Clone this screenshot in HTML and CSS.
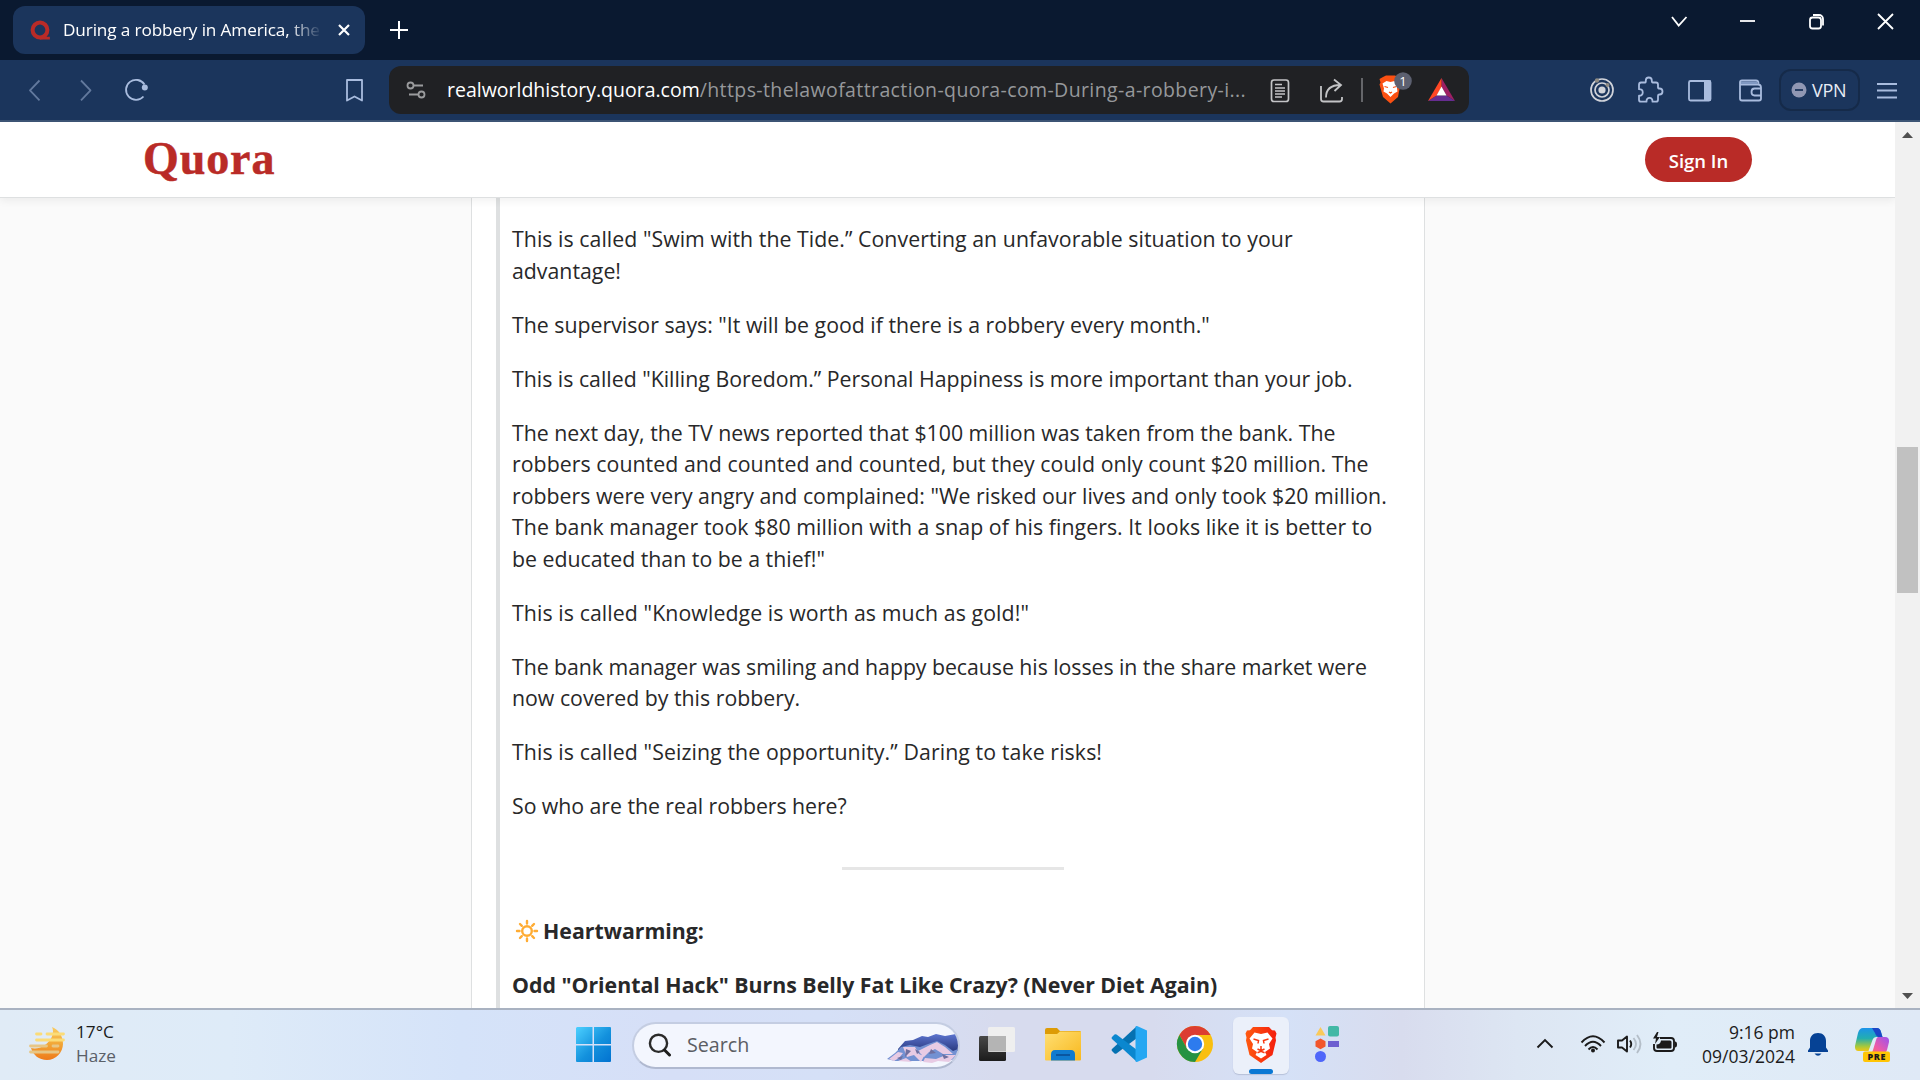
FILE: index.html
```html
<!DOCTYPE html>
<html lang="en">
<head>
<meta charset="utf-8">
<title>During a robbery in America, the</title>
<link rel="stylesheet" href="styles.css">
</head>
<body>
<div class="tabstrip">
  <div class="tab">
    <svg class="tab-icon" width="20" height="20" viewBox="30 20 20 20"><circle cx="40" cy="30" r="7.4" fill="none" stroke="#b92b27" stroke-width="4"/><path d="M40 36h5l1.500 .8h3.400v2.700H40z" fill="#b92b27"/></svg>
    <span class="tab-title">During a robbery in America, the</span>
    <svg class="tab-close" width="16" height="16" viewBox="336 22 16 16"><path d="M339 25l10 10M349 25l-10 10" stroke="#fff" stroke-width="2.200"/></svg>
  </div>
  <svg class="new-tab" width="24" height="24" viewBox="387 18 24 24"><path d="M390 30h18M399 21v18" stroke="#fff" stroke-width="2"/></svg>
  <div class="window-controls">
    <svg width="24" height="24" viewBox="1666 10 24 24"><path d="M1672 17l6.700 8.500 7.800-8.500" class="w-line"/></svg>
    <svg width="24" height="24" viewBox="1735 10 24 24"><path d="M1740 21h15" class="w-line"/></svg>
    <svg width="24" height="24" viewBox="1804 10 24 24"><rect x="1810" y="17.500" width="11" height="11" rx="2.500" class="w-line"/><path d="M1813 15h6a4 4 0 0 1 4 4v6.500" class="w-line"/></svg>
    <svg width="24" height="24" viewBox="1873 10 24 24"><path d="M1878 14l15 15M1893 14l-15 15" class="w-line"/></svg>
  </div>
</div>

<div class="toolbar">
  <svg class="ic back" viewBox="18 74 32 32"><path d="M39.500 80.500L30 90.300l9.500 10" class="t-line"/></svg>
  <svg class="ic forward" viewBox="69 74 32 32"><path d="M81 80.500l9.500 9.800-9.500 10" class="t-line"/></svg>
  <svg class="ic reload" viewBox="120 74 32 32"><path d="M144.500 84.500a10 10 0 1 0-1 12" class="t-line"/><circle cx="144.800" cy="87.500" r="3" fill="#a9bcde"/></svg>
  <svg class="ic bookmark" viewBox="338 74 32 32"><path d="M347 80h15v20.500l-7.500-4-7.500 4z" class="t-line"/></svg>
  <div class="omnibox">
    <svg class="ic tune" viewBox="400 74 32 32"><g fill="none" stroke="#9a9b9d" stroke-width="1.800"><circle cx="410.500" cy="85.500" r="3"/><path d="M413.500 85.500h9.500M409 94.500h9.500"/><circle cx="421.500" cy="94.500" r="3"/></g></svg>
    <div class="url"><span class="host">realworldhistory.quora.com</span><span class="path">/https-thelawofattraction-quora-com-During-a-robbery-i...</span></div>
    <svg class="ic reader" viewBox="1264 74 32 32"><g fill="none" stroke="#c3c4c6" stroke-width="1.700"><rect x="1271.500" y="80" width="17" height="21.500" rx="2.500"/><path d="M1275 84.500h7M1275 88h10M1275 91h10M1275 94h10M1275 97h7"/></g></svg>
    <svg class="ic share" viewBox="1315 74 32 32"><g fill="none" stroke="#c3c4c6" stroke-width="1.800"><path d="M1321 86v13q0 2.500 2.500 2.500h16q2.500 0 2.500-2.500v-2"/><path d="M1326 97.500c0-8 5-12.500 14.500-12.500M1334 79.500l7 5.500-6.500 6"/></g></svg>
    <span class="divider"></span>
    <svg class="shield" width="40" height="36" viewBox="1374 72 40 36"><path d="M1383 77l3-1.500h9l3 1.500 2 2.500-.5 3.500.8 2-2.300 12-7.500 6.500-7.500-6.500-3.500-12.500 1-2-1-3.500z" fill="#fb5012"/><path d="M1382.500 83.500l4-2.500 4 1 4-1 4 2.500-1.500 5 .5 3-3.500 2-3.500 3.500-3.500-3.500-3.500-2 .5-3z" fill="#fff"/><path d="M1384.500 86.500l3.500 1M1396.500 86.500l-3.500 1M1389 92l1.500 1 1.500-1" stroke="#fb5012" stroke-width="1.300" fill="none"/><circle cx="1403" cy="81" r="8.800" fill="#5c6070"/><text x="1403" y="86" text-anchor="middle" class="badge">1</text></svg>
    <svg class="ic bat" viewBox="1425 74 32 32"><path d="M1441.500 78v9l5 8.500 8.500 5.500z" fill="#9e1f63"/><path d="M1428 101l8.500-5.500h10l8.500 5.500z" fill="#662d91"/><path d="M1441.500 78L1428 101l8.500-5.500 5-8z" fill="#ff4724"/><path d="M1441.500 86.500l-5 9h10z" fill="#fff"/></svg>
  </div>
  <svg class="ic rewards" viewBox="1586 74 32 32"><g fill="none" stroke="#d0d3da" stroke-width="1.700"><circle cx="1602" cy="90" r="11"/><circle cx="1602" cy="90" r="7"/></g><circle cx="1602" cy="90" r="3.600" fill="#d0d3da"/><circle cx="1597" cy="80.500" r="2.200" fill="#8e8b84"/><circle cx="1607.500" cy="85" r="2" fill="#8e8b84"/></svg>
  <svg class="ic puzzle" viewBox="1636 74 32 32"><path d="M1640 85q0-2.500 2-2.500h4c1 0 .8-1.200.8-2a3 3 0 0 1 6 0c0 .8 0 2 1 2h3.200q2 0 2 2v3c0 1.200 1 1 1.500 1a3 3 0 0 1 0 6c-.5 0-1.500 0-1.500 1.200v4q0 2-2 2h-3.500c0-5-6-5-6 0h-5.500q-2 0-2-2v-4c5 0 5-6.500 0-6.500z" class="t-line"/></svg>
  <svg class="ic sidebar" viewBox="1684 74 32 32"><rect x="1689" y="81" width="21.500" height="19.500" rx="1.500" class="t-line"/><path d="M1704 80.500h7v20h-7z" fill="#a9bcde"/></svg>
  <svg class="ic wallet" viewBox="1735 74 32 32"><path d="M1740 82.500v16q0 2 2 2h17q2 0 2-2v-11q0-3-3-3h-16q-2 0-2-2t2-2h14q2.500 0 2.500 3M1761 88.500h-6.500q-3 0-3 3.500t3 3.500h6.500" class="t-line"/><path d="M1741 81.500h16v2.500h-16z" fill="#8199c2"/></svg>
  <div class="vpn"><svg width="16" height="16" viewBox="0 0 16 16"><circle cx="8" cy="8" r="7.500" fill="#9097b3"/><path d="M4 8h8" stroke="#1b355c" stroke-width="1.800"/></svg><span>VPN</span></div>
  <svg class="ic menu" viewBox="1871 74 32 32"><path d="M1877 84h20M1877 90.500h20M1877 97.500h20" class="t-line"/></svg>
</div>

<div class="page">
  <div class="site">
    <div class="site-header"><span class="logo">Quora</span><span class="signin">Sign In</span></div>
    <div class="column">
      <div class="quote">
        <p><span class="open">This is called "Swim with the Tide.” Converting an unfavorable situation to your</span><br>advantage!</p>
        <p>The supervisor says: "It will be good if there is a robbery every month."</p>
        <p>This is called "Killing Boredom.” Personal Happiness is more important than your job.</p>
        <p>The next day, the TV news reported that $100 million was taken from the bank. The<br><span class="open">robbers counted and counted and counted, but they could only count $20 million. The</span><br>robbers were very angry and complained: "We risked our lives and only took $20 million.<br><span class="open">The bank manager took $80 million with a snap of his fingers. It looks like it is better to</span><br>be educated than to be a thief!"</p>
        <p class="loose">This is called "Knowledge is worth as much as gold!"</p>
        <p><span class="tight">The bank manager was smiling and happy because his losses in the share market were</span><br>now covered by this robbery.</p>
        <p class="loose">This is called "Seizing the opportunity.” Daring to take risks!</p>
        <p class="tight">So who are the real robbers here?</p>
        <hr>
        <p class="strong"><svg class="sun" width="31" height="24" viewBox="512 919 31 24"><g fill="none" stroke="#ffac33" stroke-width="2.400" stroke-linecap="round"><circle cx="527" cy="931" r="4.800"/><path d="M527 921v2.500M527 938.500v2.500M517 931h2.500M534.500 931h2.500M520 924l1.800 1.800M532.200 936.200l1.800 1.800M534 924l-1.800 1.800M521.800 936.200L520 938"/></g></svg>Heartwarming:</p>
        <p class="strong">Odd "Oriental Hack" Burns Belly Fat Like Crazy? (Never Diet Again)</p>
      </div>
    </div>
  </div>
  <div class="scrollbar">
    <svg width="25" height="26" viewBox="0 0 25 26"><path d="M7 16l5.500-6 5.500 6z" fill="#505050"/></svg>
    <span class="thumb"></span>
    <svg width="25" height="26" viewBox="0 0 25 26"><path d="M7 11l5.500 6 5.500-6z" fill="#505050"/></svg>
  </div>
</div>

<div class="taskbar">
  <svg class="weather" width="44" height="70" viewBox="25 1010 44 70">
    <defs><linearGradient id="moon" x1="0" y1="0" x2="0" y2="1"><stop offset="0" stop-color="#f9cc62"/><stop offset=".5" stop-color="#f2a838"/><stop offset="1" stop-color="#ee7a1b"/></linearGradient></defs>
    <path d="M52 1027c3 6-1 14-7 18-5 3.500-10 4-14 3 2 7 8 12 16 12a16.500 16.500 0 0 0 16-16c0-8-4-14-11-17z" fill="url(#moon)"/>
    <g stroke-width="2.800" stroke-linecap="round" fill="none"><path d="M36.500 1034h4.500M47 1034h16.500M36.500 1040h27" stroke="#fbdc78"/><path d="M30.500 1046h16M53 1046h5M30.500 1052h27.500" stroke="#e7c685"/></g>
  </svg>
  <div class="two-line weather-text"><span>17°C</span><span class="muted">Haze</span></div>

  <svg class="start" width="36" height="70" viewBox="576 1010 36 70">
    <defs><linearGradient id="win" x1="0" y1="0" x2="1" y2="1"><stop offset="0" stop-color="#4cd0ff"/><stop offset=".55" stop-color="#1391dd"/><stop offset="1" stop-color="#0272d0"/></linearGradient></defs>
    <path d="M577 1027h15.500v17H576v-16zM594 1027h16q1 0 1 1v16h-17zM576 1045.500h16.500v16.500H577q-1 0-1-1zM594 1045.500h17v15.500q0 1-1 1h-16z" fill="url(#win)"/>
  </svg>
  <div class="search">
    <svg width="24" height="24" viewBox="648 1032 24 24"><circle cx="658.500" cy="1042.300" r="8.600" fill="none" stroke="#2a2a2a" stroke-width="2.400"/><path d="M664.500 1049l5 5" stroke="#1c1c1c" stroke-width="3" stroke-linecap="round"/></svg>
    <span>Search</span>
    <svg class="mountain" width="72" height="32" viewBox="886 1034 72 32">
      <defs><linearGradient id="rock" x1="0" y1="0" x2="0" y2="1"><stop offset="0" stop-color="#5c74cf"/><stop offset="1" stop-color="#2a3a80"/></linearGradient></defs>
      <path d="M898 1050l7-8 8-1 9-4 6 1 8-3 9 2 11-2 2 4v13h-60z" fill="url(#rock)"/>
      <path d="M887 1060l8-6 6-6 9-2 10 2 8-3 9-3 8 4 8 6 5-2v8l-6 3-9 1h-48z" fill="#7391d2"/>
      <path d="M889 1060l9-7 5 1-4 5-5 3zM903 1048l12 0 4 7 5 2-3 6-7-7-7 2zM918 1052l12-6 7-3 8 5 8 7-10 0-8-5-6 3-5 5zM925 1059l11 1 10-4 10 0-7 7-11-1-6 2-9-1zM898 1062l8-3 6 4z" fill="#e8cbe4"/>
      <path d="M906 1050l5 2-6 6zM931 1050l5 4-7 1zM942 1055l7 3-5 2zM897 1059l6-2-2 4zM915 1050l5 3-3 2z" fill="#6f6f9f"/>
    </svg>
  </div>
  <svg class="taskview" width="38" height="70" viewBox="978 1010 38 70">
    <defs><linearGradient id="tv" x1="0" y1="0" x2="0" y2="1"><stop offset="0" stop-color="#484848"/><stop offset="1" stop-color="#1c1c1c"/></linearGradient></defs>
    <rect x="979" y="1036" width="27" height="25" rx="1.500" fill="url(#tv)"/><rect x="988" y="1027" width="27" height="25" rx="1.500" fill="#efefef"/><path d="M988 1036h18v15.500h-16.500q-1.500 0-1.500-1.500z" fill="#b4b4b4"/>
  </svg>
  <svg class="folder" width="38" height="70" viewBox="1044 1010 38 70">
    <defs><linearGradient id="fold" x1="0" y1="0" x2="1" y2="1"><stop offset="0" stop-color="#ffdf73"/><stop offset="1" stop-color="#f8b81e"/></linearGradient></defs>
    <path d="M1045 1030q0-2 2-2h10l3 3h20q1 0 1 2v4h-36z" fill="#dd9b05"/><path d="M1045 1034h12l3-2.500h21v28q0 1-1 1h-34q-1 0-1-1z" fill="url(#fold)"/><path d="M1051 1060.500v-6q0-4.500 4-4.500h16q4 0 4 4.500v6z" fill="#0f7bcf"/><path d="M1056 1055h14" stroke="#0a4a91" stroke-width="1.500"/>
  </svg>
  <svg class="vscode" width="38" height="70" viewBox="1110 1010 38 70">
    <path d="M1137 1026v12l-20.500 15.500q-1 .6-2-.1l-2.500-2.300q-1-1 0-2z" fill="#0571b1"/><path d="M1137 1062v-12l-20.500-15.500q-1-.6-2 .1l-2.500 2.300q-1 1 0 2z" fill="#0b87cf"/><path d="M1137 1026l10 4.500v27l-10 4.500-1.500-.5v-35z" fill="#25a7f2"/>
  </svg>
  <svg class="chrome" width="38" height="70" viewBox="1176 1010 38 70">
    <circle cx="1195" cy="1044" r="18" fill="#f9bf10"/><path d="M1179.400 1035a18 18 0 0 1 31.200 0H1195l-8 13.500z" fill="#dc3d31"/><path d="M1179.400 1035a18 18 0 0 0 15.600 27l8-13.500h-16z" fill="#259243"/><circle cx="1195" cy="1044" r="9.200" fill="#fff"/><circle cx="1195" cy="1044" r="7.200" fill="#2d7bee"/>
  </svg>
  <div class="active-app">
    <svg width="32" height="38" viewBox="1245 1025 32 38">
      <defs><linearGradient id="lion" x1="0" y1="0" x2="1" y2="0"><stop offset="0" stop-color="#ff5a10"/><stop offset="1" stop-color="#f41e0d"/></linearGradient></defs>
      <path d="M1253 1026h16l3 3.300 3 .2 1.500 3-1 4 .5 3-3.500 14.500-11.500 8-11.500-8-3.500-14.500.5-3-1-4 1.500-3 3-.2z" fill="url(#lion)"/>
      <path d="M1254.500 1031.500l6.500 1.500 6.500-1.500 5 6-3.500 5.500 1 4.500-5 3.500 1.500 3-5.500 3.500-5.500-3.500 1.500-3-5-3.500 1-4.500-3.500-5.500z" fill="#fff"/>
      <path d="M1253.500 1038l5 1.500-.5 3M1268.500 1038l-5 1.500.5 3M1257.500 1048l3.500 1.700 3.500-1.700M1261 1045v4.500M1257.500 1051.800l3.500-1.500 3.500 1.500" fill="none" stroke="#f8380f" stroke-width="1.500"/>
    </svg>
    <span class="underline"></span>
  </div>
  <svg class="shapes" width="26" height="70" viewBox="1314 1010 26 70">
    <path d="M1320.500 1027l5 8.500h-10z" fill="#fac95a"/><rect x="1328" y="1026" width="11" height="10.500" rx="2" fill="#42b8a6"/><path d="M1320.500 1038.500l5 2.700v5.400l-5 2.700-5-2.700v-5.400z" fill="#f2552c"/><rect x="1328" y="1041" width="11" height="6" fill="#6d5fd0"/><circle cx="1320.500" cy="1056.500" r="5.500" fill="#4f66fa"/>
  </svg>

  <svg class="tray" width="150" height="70" viewBox="1532 1010 150 70">
    <g fill="none" stroke="#1b1b1b" stroke-width="1.900">
      <path d="M1537.500 1047.500l7.500-7.500 7.500 7.500"/>
      <path d="M1581.500 1042.500q11.500-12.500 23 0M1585 1046q8-8.500 16 0M1588.500 1049.500q4.500-5 9 0"/>
      <path d="M1618 1040.500h4l5-4v15l-5-4h-4z" stroke-linejoin="round"/><path d="M1630 1040.500q2.500 3.500 0 7"/>
      <path d="M1633.500 1038q5 6 0 12M1637 1035q7 9 0 18" stroke="#b4bec8"/>
      <path d="M1660 1038h11q3 0 3 3v7q0 3-3 3h-14q-3 0-3-3v-4"/>
    </g>
    <circle cx="1593" cy="1050.500" r="2" fill="#1b1b1b"/>
    <path d="M1661 1040.500h9q1.500 0 1.500 1.500v5.500q0 1-1 1h-13q-1 0-1-1v-3q4 0 4.500-4zM1675 1041.500q2 0 2 3t-2 3zM1657 1032l-4 6.500h3l-1 5.500 5-7h-3l1.500-5z" fill="#1b1b1b"/>
  </svg>
  <div class="two-line clock"><span>9:16 pm</span><span>09/03/2024</span></div>
  <svg class="bell" width="24" height="70" viewBox="1806 1010 24 70"><path d="M1818 1033c-5 0-8 3.500-8 8v6.500l-2 3v1.500h20v-1.500l-2-3v-6.500c0-4.500-3-8-8-8zM1814.500 1053.500h7q-3.500 4.500-7 0z" fill="#064295"/></svg>
  <svg class="copilot" width="38" height="70" viewBox="1854 1010 38 70">
    <defs><linearGradient id="cpa" x1="0" y1="0" x2="0" y2="1"><stop offset="0" stop-color="#1c93ea"/><stop offset=".45" stop-color="#23aeb0"/><stop offset=".8" stop-color="#a7c83c"/><stop offset="1" stop-color="#f2c713"/></linearGradient><linearGradient id="cpb" x1="1" y1="0" x2="0" y2="1"><stop offset="0" stop-color="#9a52f0"/><stop offset=".6" stop-color="#ef5aa5"/><stop offset="1" stop-color="#fb7a4a"/></linearGradient></defs>
    <path d="M1863 1028h14q3 0 4 4l1.500 5h-6q-3 0-4 3l-4 11h-10q-4 0-3.500-5l3-13q1.500-5 5-5z" fill="url(#cpa)"/><path d="M1872 1028h5q3 0 4 4l1.500 5h-4q-2.500-.5-3.500-4z" fill="#1b46c7"/><path d="M1878 1037h7q4.500 0 4 5l-2 8q-2 5-6 5h-12q3-1 4-5l3-10q.6-2.500 2-3z" fill="url(#cpb)"/>
    <rect x="1863" y="1051.500" width="27" height="10.500" rx="2" fill="#ffc505"/><text x="1876.700" y="1060.200" text-anchor="middle" class="pre">PRE</text>
  </svg>
</div>
</body>
</html>
```
FILE: styles.css
```css
* { box-sizing: border-box; }
body {
  margin: 0;
  width: 1920px;
  height: 1080px;
  overflow: hidden;
  display: flex;
  flex-direction: column;
  font-family: "Open Sans", "Noto Sans", sans-serif;
  background: #fff;
}
svg { display: block; flex: none; }

/* tab strip */
.tabstrip {
  height: 60px;
  flex: none;
  display: flex;
  align-items: center;
  padding-left: 13px;
  background: #0a1930;
  color: #fff;
}
.tab {
  width: 352px;
  height: 48px;
  display: flex;
  align-items: center;
  padding-left: 17px;
  border-radius: 12px;
  background: #1b355c;
}
.tab-title {
  width: 257px;
  margin-left: 13px;
  overflow: hidden;
  white-space: nowrap;
  font-size: 17.2px;
  letter-spacing: -.13px;
  line-height: 24px;
  mask-image: linear-gradient(90deg, #000 225px, transparent 259px);
}
.tab-close { margin-left: 16px; }
.new-tab { margin-left: 22px; }
.window-controls {
  display: flex;
  gap: 45px;
  height: 60px;
  padding-top: 10px;
  margin-left: auto;
  margin-right: 23px;
}
.w-line { fill: none; stroke: #fff; stroke-width: 1.8; }

/* toolbar */
.toolbar {
  height: 62px;
  flex: none;
  display: flex;
  align-items: center;
  background: #1b355c;
  border-bottom: 2px solid #3c5474;
}
.ic { width: 32px; height: 32px; }
.t-line { fill: none; stroke: #a9bcde; stroke-width: 1.8; stroke-linejoin: round; }
.back { margin-left: 18px; opacity: .5; }
.forward { margin-left: 19px; opacity: .5; }
.reload { margin-left: 19px; }
.bookmark { margin-left: 186px; }
.omnibox {
  width: 1080px;
  height: 48px;
  margin-left: 19px;
  display: flex;
  align-items: center;
  border-radius: 12px;
  background: #202124;
}
.tune { margin-left: 11px; }
.url {
  width: 816px;
  margin-left: 15px;
  margin-right: 1px;
  white-space: nowrap;
  font-size: 19.5px;
  line-height: 28px;
}
.host { color: #fff; }
.path { color: #96989b; letter-spacing: .39px; }
.share { margin-left: 19px; }
.divider { width: 2px; height: 24px; margin-left: 14px; background: #65666a; }
.shield { margin-left: 11px; }
.badge { font-size: 13px; fill: #fff; }
.bat { margin-left: 11px; }
.rewards { margin-left: 117px; }
.puzzle, .sidebar { margin-left: 17px; }
.wallet { margin-left: 19px; }
.vpn {
  width: 81px;
  height: 42px;
  margin-left: 12px;
  display: flex;
  align-items: center;
  gap: 5px;
  padding: 0 0 1px 10px;
  border: 2px solid #152a49;
  border-radius: 12px;
  color: #e8ecf5;
  font-size: 18px;
  letter-spacing: -.3px;
}
.menu { margin-left: 11px; }

/* web page */
.page { flex: 1; min-height: 0; display: flex; }
.site { flex: 1; display: flex; flex-direction: column; background: #fafafa; overflow: hidden; }
.site-header {
  height: 76px;
  flex: none;
  display: flex;
  align-items: center;
  justify-content: space-between;
  padding: 0 143px;
  background: #fff;
  border-bottom: 1px solid #dee0e1;
  box-shadow: 0 3px 8px rgba(0, 0, 0, .06);
  z-index: 1;
}
.logo {
  padding-bottom: 2px;
  font: bold 46px/48px "Liberation Serif", serif;
  letter-spacing: .9px;
  color: #b92b27;
  -webkit-text-stroke: .5px #b92b27;
}
.signin {
  width: 107px;
  height: 45px;
  border-radius: 23px;
  background: #b92b27;
  color: #fff;
  font-size: 18.5px;
  font-weight: 650;
  line-height: 47px;
  text-align: center;
}
.column {
  flex: 1;
  min-height: 0;
  width: 954px;
  margin-left: 471px;
  padding-left: 24px;
  background: #fff;
  border: solid #dee0e1;
  border-width: 0 1px;
}
.quote {
  height: 100%;
  padding: 25px 0 0 12px;
  border-left: 4px solid #dee0e1;
  overflow: hidden;
  color: #282829;
  font-size: 21.3px;
  line-height: 31.5px;
  white-space: nowrap;
}
.quote p { margin: 0 0 22.5px; }
.quote .open { letter-spacing: .045px; }
.quote .loose { letter-spacing: .09px; }
.quote .tight { letter-spacing: -.05px; }
.quote hr {
  width: 222px;
  height: 3px;
  margin: 45.5px 0 44.7px 330px;
  border: 0;
  background: #e6e6e6;
}
.strong { font-weight: 700; }
.sun { display: inline-block; vertical-align: -4px; }
.scrollbar {
  width: 25px;
  display: flex;
  flex-direction: column;
  justify-content: space-between;
  background: #f1f1f1;
}
.thumb {
  width: 21px;
  height: 146px;
  margin: 299px 0 auto 2px;
  background: #c1c1c1;
}

/* taskbar */
.taskbar {
  height: 72px;
  flex: none;
  display: flex;
  align-items: center;
  border-top: 2px solid #a9b2c1;
  background: linear-gradient(90deg, #e0ebf6 0, #deebf8 12%, #d5e3f9 24%, #d6dff7 35%, #d5e0f7 43%, #d7dbee 52%, #d7dbee 60%, #d5e1f7 67%, #d8dcee 73%, #dde6f3 79%, #e0edf8 87%, #dfe9f6 100%);
  color: #1b1b1b;
  font-size: 17.5px;
}
.weather { margin-left: 25px; }
.two-line { display: flex; flex-direction: column; line-height: 24px; padding-bottom: 3px; }
.weather-text { width: 60px; margin-left: 7px; font-size: 17.2px; }
.muted { color: #5a6068; }
.start { margin-left: 440px; }
.search {
  width: 328px;
  height: 47px;
  margin-left: 20px;
  margin-right: -1px;
  display: flex;
  align-items: center;
  padding-left: 14px;
  border: 2px solid #c4cde2;
  border-bottom-color: #b0b9d0;
  border-radius: 24px;
  background: #f3f6fe;
  overflow: hidden;
  color: #5b5d63;
  font-size: 19.7px;
}
.search span { margin-left: 15px; line-height: 40px; }
.mountain { margin: 8px 0 0 auto; }
.taskview { margin-left: 19px; }
.folder, .vscode, .chrome { margin-left: 28px; }
.active-app {
  width: 56px;
  height: 57px;
  margin-left: 19px;
  display: flex;
  flex-direction: column;
  align-items: center;
  justify-content: space-between;
  padding-top: 9px;
  border-radius: 6px;
  background: #ebf0fa;
  box-shadow: 0 1px 1px rgba(90, 100, 130, .25);
}
.underline { width: 24px; height: 5px; border-radius: 3px; background: #0a78d4; }
.shapes { margin-left: 25px; }
.tray { margin-left: 192px; }
.clock { width: 113px; align-items: flex-end; }
.bell { margin-left: 11px; }
.copilot { margin-left: 24px; }
.pre { font-size: 9px; font-weight: 800; letter-spacing: .6px; fill: #1b1b1b; }
```
